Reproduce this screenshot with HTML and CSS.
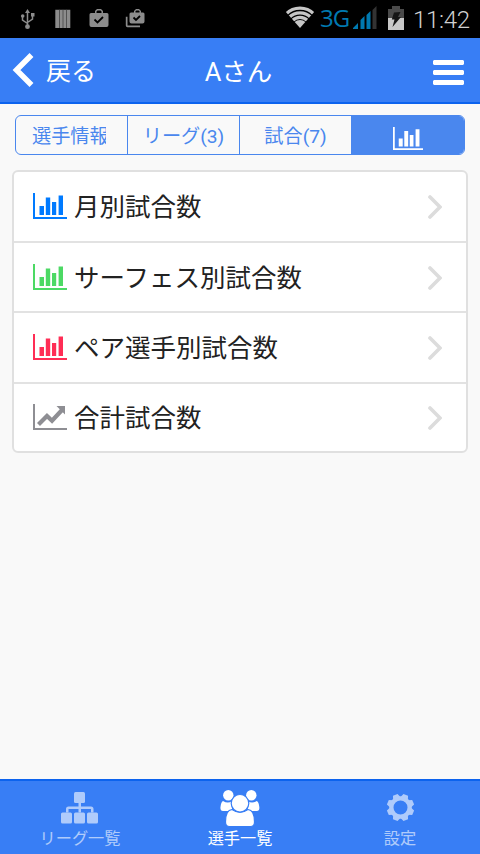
FILE: index.html
```html
<!DOCTYPE html>
<html lang="ja">
<head>
<meta charset="UTF-8">
<meta name="viewport" content="width=device-width, initial-scale=1.0">
<title>Aさん</title>
<link rel="stylesheet" href="styles.css">
</head>
<body>
<!-- icons used more than once -->
<svg class="defs" width="0" height="0">
    <symbol id="bars" viewBox="0 0 34 26">
        <path d="M0 0h2v24h32v2H0z M6.500 13h4.500v9H6.500z M12.800 4.500h4.400V22h-4.400z M19 9h4.200v13H19z M25.600 2.500H30V22h-4.400z"/>
    </symbol>
    <symbol id="chevron" viewBox="0 0 14 24">
        <path d="M2 2l10 10L2 22" fill="none" stroke="#dcdcdc" stroke-width="3.700" stroke-linecap="round"/>
    </symbol>
</svg>

<div class="status">
    <svg class="s-left" width="140" height="38" viewBox="0 0 140 38">
        <g fill="none" stroke="#8c8c8c" stroke-width="1.500">
            <path d="M27.500 12v14M22.500 16v4l5 3.500M32.500 15v4l-5 3.500"/>
        </g>
        <g fill="#8c8c8c">
            <path d="M27.500 9l2.500 4h-5z"/>
            <circle cx="27.500" cy="26.700" r="2.400"/>
            <circle cx="22.700" cy="16" r="1.800"/>
            <path d="M31 13h3.500v3.500H31z"/>
            <path d="M55.300 9.700h15v18.300h-15z"/>
            <path d="M91 13h4v-2l2-2h4l2 2v2h4q1.500 0 1.500 1.500V25q0 2-2 2H91.500q-2 0-2-2V14.500Q89.500 13 91 13zm5.500 0h5v-1.500l-1-1h-3l-1 1z" fill-rule="evenodd"/>
            <path d="M131 12.500h3V11l2-2h3l2 2v1.500h2q1.500 0 1.500 1.500v7.500q0 2-2 2h-11q-2 0-2-2V14q0-1.500 1.500-1.500zm4.500 0h4V11l-1-.500h-2l-1 .500z" fill-rule="evenodd"/>
            <path d="M125.800 16.800h1.700v8.700H140v1.800h-12.500q-1.700 0-1.700-1.700z"/>
        </g>
        <path d="M59.500 9.700V28M63 9.700V28M66.500 9.700V28" stroke="#444" stroke-width=".8"/>
        <path d="M94.500 19.500l3 3 5.500-5.500M133.500 17.500l2.500 2.500 4-4" fill="none" stroke="#000" stroke-width="1.800"/>
    </svg>
    <div class="s-right">
        <svg width="30" height="23" viewBox="0 0 30 23">
            <clipPath id="fan"><path d="M15 22L0 5Q15-6 30 5z"/></clipPath>
            <g clip-path="url(#fan)" fill="none" stroke="#c6c6c6" stroke-width="3.300">
                <circle cx="15" cy="22" r="19.800"/>
                <circle cx="15" cy="22" r="15.200"/>
                <circle cx="15" cy="22" r="10.600"/>
                <circle cx="15" cy="22" r="4" stroke-width="8"/>
            </g>
        </svg>
        <span class="net">3G</span>
        <svg class="signal" width="24" height="23" viewBox="0 0 24 23">
            <path d="M0 23v-1l5-5v6zM7.500 14l4-4v13h-4zM13.500 9l4-4v18h-4z" fill="#0079b0"/>
            <path d="M19.500 4l4-4v23h-4z" fill="#333"/>
        </svg>
        <svg class="battery" width="16" height="24" viewBox="0 0 16 24">
            <path d="M0 3h4V0h8v3h4v9H0z" fill="#4a4a4a"/>
            <path d="M0 12h16v12H0z" fill="#c8c8c8"/>
            <path d="M6 6.500l6.500-.500-2.500 5h3L4.500 21l2-7.500H3.800z" fill="#151515"/>
        </svg>
        <span class="clock">11:42</span>
    </div>
</div>

<div class="header">
    <a class="back">
        <svg width="21" height="34" viewBox="0 0 21 34"><path d="M18.500 2L3.500 17l15 15" fill="none" stroke="#fff" stroke-width="5.500"/></svg>
        <span>戻る</span>
    </a>
    <h1 class="title">Aさん</h1>
    <svg class="menu" width="31" height="25" viewBox="0 0 31 25">
        <path d="M1 0h29l1 1v3l-1 1H1L0 4V1zM1 10h29l1 1v3l-1 1H1l-1-1v-3zM1 20h29l1 1v3l-1 1H1l-1-1v-3z" fill="#fff"/>
    </svg>
</div>

<div class="content">
    <div class="tabs">
        <a class="tab first"><span>選手情報</span></a>
        <a class="tab"><span>リーグ(3)</span></a>
        <a class="tab"><span>試合(7)</span></a>
        <a class="tab active"><svg width="30" height="23" viewBox="0 0 34 26"><use href="#bars" width="34" height="26"/></svg></a>
    </div>

    <ul class="list">
        <li>
            <svg class="icon blue" width="34" height="26"><use href="#bars"/></svg>
            <span>月別試合数</span>
            <svg class="arrow" width="14" height="24"><use href="#chevron"/></svg>
        </li>
        <li>
            <svg class="icon green" width="34" height="26"><use href="#bars"/></svg>
            <span>サーフェス別試合数</span>
            <svg class="arrow" width="14" height="24"><use href="#chevron"/></svg>
        </li>
        <li>
            <svg class="icon red" width="34" height="26"><use href="#bars"/></svg>
            <span>ペア選手別試合数</span>
            <svg class="arrow" width="14" height="24"><use href="#chevron"/></svg>
        </li>
        <li>
            <svg class="icon gray" width="34" height="26" viewBox="0 0 34 26">
                <path d="M0 0h2v24h32v2H0z"/>
                <path d="M5.500 20.500l8.500-8.500 5 4.700L29 6" fill="none" stroke="#8e8e93" stroke-width="4.200"/>
                <path d="M23.500 2H32v8.500z"/>
            </svg>
            <span>合計試合数</span>
            <svg class="arrow" width="14" height="24"><use href="#chevron"/></svg>
        </li>
    </ul>
</div>

<div class="footer">
    <a class="item">
        <svg width="38" height="36" viewBox="0 0 38 36">
            <g fill="#fff">
                <rect x="13" y="2" width="11" height="11" rx="1.500"/>
                <rect x="0" y="22.500" width="11" height="11" rx="1.500"/>
                <rect x="13" y="22.500" width="11" height="11" rx="1.500"/>
                <rect x="26" y="22.500" width="11" height="11" rx="1.500"/>
                <path d="M17.500 13h2.500v3.500h10q2.500 0 2.500 2.500v3.500H30V19H20v3.500h-2.500V19h-10v3.500H5V19q0-2.500 2.500-2.500h10z"/>
            </g>
        </svg>
        <span>リーグ一覧</span>
    </a>
    <a class="item on">
        <svg width="40" height="36" viewBox="0 0 40 36">
            <g fill="#fff">
                <circle cx="8.300" cy="5.300" r="5.200"/>
                <circle cx="31.300" cy="5.300" r="5.200"/>
                <path d="M3 11q5 3 9 0v10H3Q0 21 .500 17 1 12 3 11zM36.800 11q-5 3-9 0v10h9q3 0 2.500-4-.500-5-2.500-6z"/>
            </g>
            <g fill="#fff" stroke="#387ef5" stroke-width="1.200">
                <path d="M12 19.500q8 5.500 16 0c5 .500 6.500 6.500 6.500 12.500q0 4.500-4 4.500h-21q-4 0-4-4.500c0-6 1.500-12 6.500-12.500z"/>
                <circle cx="20" cy="13.300" r="8.800"/>
            </g>
        </svg>
        <span>選手一覧</span>
    </a>
    <a class="item">
        <svg width="28" height="36" viewBox="-14.500 -17.500 28 36">
            <g fill="#fff">
                <path fill-rule="evenodd" d="M-11.300 0a11.300 11.300 0 1 0 22.600 0a11.300 11.300 0 1 0-22.600 0zM-7 0a7 7 0 1 0 14 0a7 7 0 1 0-14 0z"/>
                <g id="teeth">
                    <path id="tooth" d="M-3.800-10l1.300-3.700h5l1.300 3.700z" transform="rotate(22.500)"/>
                    <use href="#tooth" transform="rotate(45)"/>
                    <use href="#tooth" transform="rotate(90)"/>
                    <use href="#tooth" transform="rotate(135)"/>
                </g>
                <use href="#teeth" transform="rotate(180)"/>
            </g>
        </svg>
        <span>設定</span>
    </a>
</div>
</body>
</html>
```

FILE: styles.css
```css
* { margin: 0; padding: 0; box-sizing: border-box; }
body { display: flex; flex-direction: column; height: 854px; background: #f9f9f9; color: #222; font-family: Roboto, "Noto Sans CJK JP", sans-serif; overflow: hidden; }
svg { display: block; flex: none; overflow: visible; }
.defs { position: absolute; }

.status { display: flex; justify-content: space-between; height: 38px; background: #000; }
.s-right { display: flex; padding: 6px 9px 0 0; line-height: 28px; }
.s-right .net { margin-left: 5px; width: 29px; font-family: "Open Sans", sans-serif; font-size: 24px; line-height: 24px; letter-spacing: -1px; color: #0079b0; }
.s-right .signal { margin: 0 0 0 4px; }
.s-right .battery { margin-left: 11px; }
.s-right .clock { width: 58px; margin-left: 9px; font-size: 24px; font-weight: 300; letter-spacing: -.3px; color: #d0d0d0; }

.header { display: grid; grid-template-columns: 1fr auto 1fr; align-items: center; height: 66px; padding: 0 16px 0 13px; background: #387ef5; border-bottom: 2px solid #0c63ee; color: #fff; }
.back { display: flex; align-items: center; font-size: 25px; line-height: 32px; }
.back span { margin-left: 12px; padding-top: 3px; }
.header .title { padding-top: 3px; font-size: 25.5px; font-weight: 400; line-height: 32px; }
.header .menu { justify-self: end; margin-top: 5px; }

.content { flex: 1; padding: 11px 12px 0; }
.tabs { display: flex; height: 40px; margin: 0 3px 15px; border: 1px solid #4a87ee; border-radius: 6px; overflow: hidden; color: #4a87ee; font-size: 19.200px; }
.tab { flex: none; width: 112px; display: flex; align-items: center; justify-content: center; white-space: nowrap; }
.tab + .tab { border-left: 1px solid #4a87ee; }
.tab.first { width: 111px; justify-content: flex-start; padding-left: 16px; }
.tab.first span { width: 74px; overflow: hidden; }
.tab.active { flex: 1; background: #4a87ee; }
.tab.active svg { fill: #fff; margin-top: 6px; }

.list { list-style: none; background: #fff; border: 2px solid #e0e0e0; border-radius: 6px; }
.list li { display: flex; align-items: center; height: 70.500px; padding: 0 24px 0 19px; font-size: 25.500px; }
.list li:first-child { height: 68.500px; }
.list li:last-child { height: 69.500px; }
.list li + li { border-top: 2px solid #e2e2e2; }
.list li span { margin-top: -3px; }
.list .icon { margin-right: 7px; }
.list .arrow { margin: 2px 0 0 auto; }
.blue { fill: #007aff; }
.green { fill: #4cd964; }
.red { fill: #ff2d55; }
.gray { fill: #8e8e93; }

.footer { display: flex; height: 75px; background: #387ef5; border-top: 2px solid #0c63ee; color: #fff; font-size: 16.200px; }
.footer .item { flex: 1; display: flex; flex-direction: column; align-items: center; padding-top: 9px; line-height: 26px; opacity: .6; }
.footer .on { opacity: 1; }
```
